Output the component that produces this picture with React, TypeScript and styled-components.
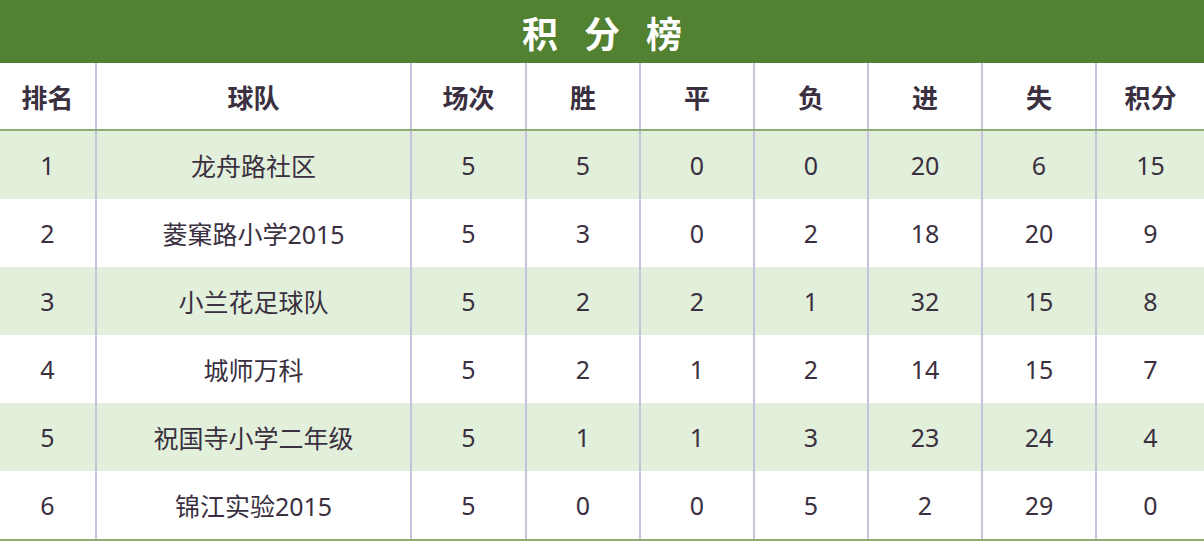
import {} from 'react'
import styled, {createGlobalStyle} from 'styled-components'

type Team = {
  rank: number
  name: string
  played: number
  win: number
  draw: number
  lose: number
  goalsFor: number
  goalsAgainst: number
  points: number
}

const teams: Team[] = [
  {rank: 1, name: '龙舟路社区', played: 5, win: 5, draw: 0, lose: 0, goalsFor: 20, goalsAgainst: 6, points: 15},
  {rank: 2, name: '菱窠路小学2015', played: 5, win: 3, draw: 0, lose: 2, goalsFor: 18, goalsAgainst: 20, points: 9},
  {rank: 3, name: '小兰花足球队', played: 5, win: 2, draw: 2, lose: 1, goalsFor: 32, goalsAgainst: 15, points: 8},
  {rank: 4, name: '城师万科', played: 5, win: 2, draw: 1, lose: 2, goalsFor: 14, goalsAgainst: 15, points: 7},
  {rank: 5, name: '祝国寺小学二年级', played: 5, win: 1, draw: 1, lose: 3, goalsFor: 23, goalsAgainst: 24, points: 4},
  {rank: 6, name: '锦江实验2015', played: 5, win: 0, draw: 0, lose: 5, goalsFor: 2, goalsAgainst: 29, points: 0},
]

const headers = ['排名', '球队', '场次', '胜', '平', '负', '进', '失', '积分']

const App = () => {
  return (
    <Container>
      <GlobalStyle />
      <Title>积分榜</Title>
      <HeaderRow>
        {headers.map((h) => (
          <HeadCell key={h}>{h}</HeadCell>
        ))}
      </HeaderRow>
      {teams.map((t, i) => {
        const striped = i % 2 === 0
        const values = [t.rank, t.name, t.played, t.win, t.draw, t.lose, t.goalsFor, t.goalsAgainst, t.points]
        return (
          <Row key={t.rank} $striped={striped} $last={i === teams.length - 1}>
            {values.map((v, j) => (
              <Cell key={j} $striped={striped}>
                {v}
              </Cell>
            ))}
          </Row>
        )
      })}
    </Container>
  )
}

const GlobalStyle = createGlobalStyle`
  html, body {
    margin: 0;
    padding: 0;
    background: #ffffff;
  }
  body {
    font-family: "Noto Sans", "Noto Sans CJK SC", sans-serif;
  }
`
const Container = styled('div')`
  width: 1204px;
  color: #3a3040;
`
const Title = styled('div')`
  height: 63px;
  background: #518131;
  color: #ffffff;
  display: flex;
  align-items: center;
  justify-content: center;
  font-family: "Noto Sans CJK SC", sans-serif;
  font-size: 36px;
  font-weight: 700;
  letter-spacing: 26px;
  padding-left: 26px;
  box-sizing: border-box;
`
const columns = '95px 315px 115px 114px 114px 114px 114px 114px 1fr'

const HeaderRow = styled('div')`
  display: grid;
  grid-template-columns: ${columns};
  height: 68px;
  background: #ffffff;
  border-bottom: 2px solid #8cae72;
  box-sizing: border-box;
`
const HeadCell = styled('div')`
  display: flex;
  align-items: center;
  justify-content: center;
  font-family: "Noto Sans CJK SC", sans-serif;
  font-size: 26px;
  font-weight: 600;
  color: #3a3040;
  & + & {
    border-left: 2px solid #c6c4dc;
  }
`
const Row = styled('div')<{$striped: boolean; $last: boolean}>`
  display: grid;
  grid-template-columns: ${columns};
  height: 68px;
  background: ${(p) => (p.$striped ? '#e2efda' : '#ffffff')};
  border-bottom: ${(p) => (p.$last ? '2px solid #8cae72' : 'none')};
`
const Cell = styled('div')<{$striped: boolean}>`
  display: flex;
  align-items: center;
  justify-content: center;
  font-size: 25px;
  font-weight: 400;
  color: #3a3040;
  & + & {
    border-left: 2px solid ${(p) => (p.$striped ? 'transparent' : '#c6c4dc')};
  }
`

export default App
